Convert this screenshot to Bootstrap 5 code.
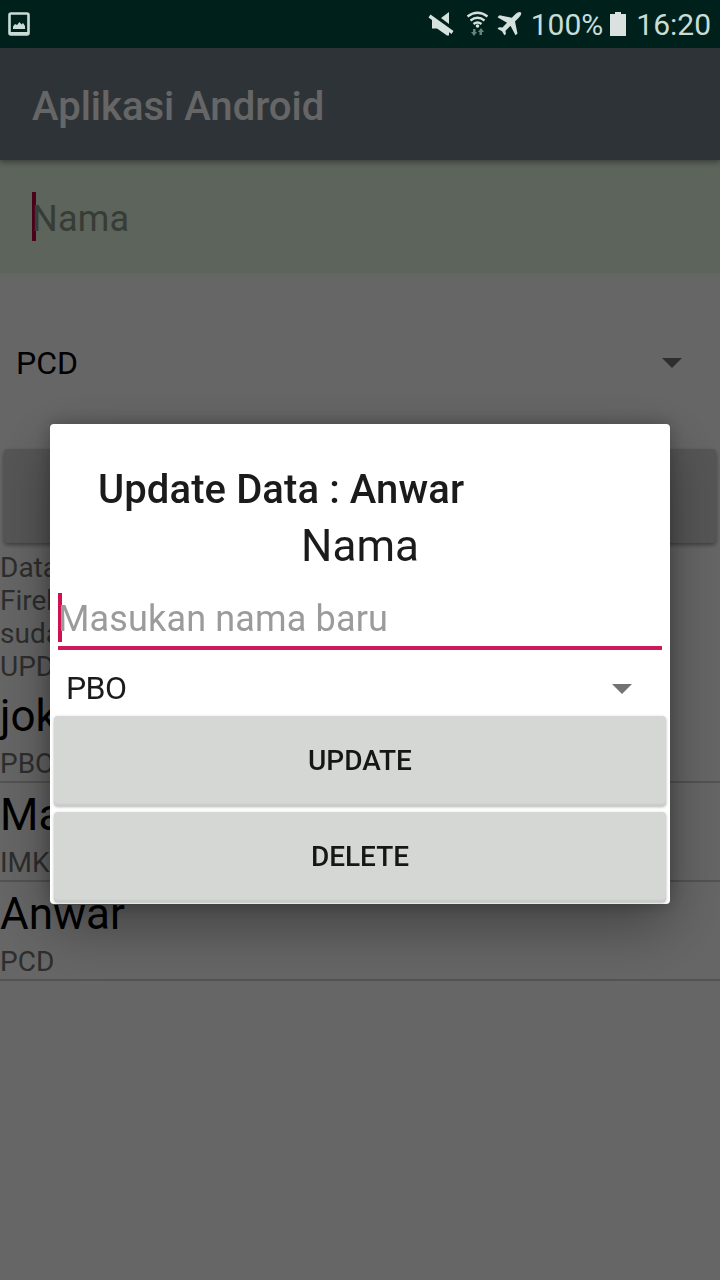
<!DOCTYPE html>
<html lang="id">
<head>
<meta charset="utf-8">
<meta name="viewport" content="width=device-width, initial-scale=1">
<title>Aplikasi Android</title>
<link href="https://cdn.jsdelivr.net/npm/bootstrap@5.3.0/dist/css/bootstrap.min.css" rel="stylesheet">
<style>
  body { font-family: Roboto, sans-serif; line-height: 1.172; color: #000; background: #fff; height: 1280px; overflow: hidden; }
  .status-bar { height: 48px; background: #00211b; color: #c9dcd6; font-size: 30px; position: relative; z-index: 1060; }
  .status-text { padding-top: 2px; }
  .app-bar { height: 112px; background: #707f8a; color: #fff; font-size: 40px; font-weight: 500; padding: 7px 32px 0; box-shadow: 0 2px 6px rgba(0,0,0,.4); position: relative; }
  .name-field { height: 113px; background: #e7f9e4; padding: 6px 32px 0; font-size: 36px; letter-spacing: .2px; color: #8b9689; }
  .caret-line { width: 4px; height: 49px; background: #d01050; flex: none; margin-right: -4px; }
  .caret-main { background: #b8063d; margin-top: -6px; }
  .spinner-main { height: 180px; font-size: 32px; padding: 0 38px 0 16px; }
  .spinner-main span:first-child { padding-top: 2px; }
  .arrow-down { width: 20px; height: 10px; background: #737373; clip-path: polygon(0 0, 100% 0, 50% 100%); }
  .main-btn { height: 94px; margin: -4px 4px 0; background: #d6d7d6; border-radius: 4px; box-shadow: 0 2px 4px rgba(0,0,0,.4); }
  .note { margin-top: 8px; font-size: 28px; line-height: 33px; color: #737373; }
  .entry { height: 99px; border-bottom: 2px solid #cfcfcf; padding-top: 6px; }
  .entries { padding-top: 1px; }
  .entry-name { font-size: 44px; line-height: 52px; }
  .entry-sub { font-size: 28px; line-height: 33px; margin-top: 5px; color: #737373; }
  .scrim { background: rgba(0,0,0,.6); padding-top: 424px; }
  .dialog-box { width: 620px; height: 480px; border: 0; border-radius: 4px; background: #fff; color: #1b1b1b; box-shadow: 0 22px 60px rgba(0,0,0,.36), 0 0 18px rgba(0,0,0,.26); overflow: hidden; }
  .dialog-box > * { flex-shrink: 0; }
  .dialog-heading { font-size: 40px; font-weight: 500; line-height: 47px; letter-spacing: .1px; padding: 42px 48px 0; }
  .dialog-label { font-size: 44px; line-height: 52px; margin-top: 7px; }
  .dialog-input { height: 57px; margin: 21px 8px 0; border-bottom: 4px solid #cc1a5a; font-size: 36px; letter-spacing: .15px; color: #9b9b9b; }
  .dialog-input .caret-line { align-self: flex-start; }
  .dialog-select { height: 66px; padding: 12px 38px 0 16px; font-size: 32px; letter-spacing: -.6px; }
  .flat-btn { height: 90px; margin: 0 4px 6px; padding: 0; background: #d5d7d5; border-radius: 4px; border: 0; font-size: 28px; font-weight: 500; color: #161616; box-shadow: 0 1px 3px rgba(0,0,0,.3), inset 0 -3px 2px -1px rgba(0,0,0,.06); }
</style>
</head>
<body>
<div class="status-bar d-flex align-items-center">
  <svg class="ms-2" width="22" height="24" viewBox="0 0 22 24"><rect x="1.5" y="1.5" width="19" height="21" rx="1.5" fill="none" stroke="#c9dcd6" stroke-width="2.6"/><path d="M1 20h20v3H1zM5 17v-2.500l2-2.500 2 1 2.500-3 2 2.500 1.500-1.500 2 3v3z" fill="#c9dcd6"/></svg>
  <svg class="ms-auto" width="96" height="48" viewBox="428 0 96 48" fill="#d5e1dc">
    <path d="M432 19v9.500h5l10 7h2v-5zM441 18l8-6v12z"/>
    <path d="M429.500 16l23 16.500" stroke="#d5e1dc" stroke-width="3.400"/>
    <g fill="none" stroke="#d5e1dc" stroke-width="2.300"><path d="M467.500 16.500Q477.500 9 487.500 16.500M470.500 20.500Q477.500 15 484.500 20.500M473.500 24Q477.500 21 481.500 24"/></g>
    <circle cx="477.500" cy="26" r="1.800"/>
    <path d="M473 29h2.500v3h1.500l-3 4-3-4h2zM481 28l3 4h-2v3h-2.500v-3h-1.500z" fill="#66847c"/>
    <path d="M521 12.500q1 2-2 5l-4 4 2.500 12-2 1.800-5-9.500-5 5 .4 3.200-1.500 1.300-2.400-4-4.500-2.500 1.500-1.500 3.500.3 4.500-4.800-9.500-5.500 2-2 12.300 2.500 4-4q3.200-3 5.200-1.300z"/>
  </svg>
  <span class="status-text" style="margin-left:7px">100%</span>
  <svg width="16" height="24" viewBox="0 0 16 24" style="margin-left:7px"><path d="M0 2h5V0h6v2h5v22H0z" fill="#d9e2de"/></svg>
  <span class="status-text" style="margin:0 9px 0 10px">16:20</span>
</div>
<header class="app-bar d-flex align-items-center">Aplikasi Android</header>
<main>
  <div class="name-field d-flex align-items-center"><span class="caret-line caret-main"></span><span>Nama</span></div>
  <div class="spinner-main d-flex align-items-center justify-content-between"><span>PCD</span><span class="arrow-down"></span></div>
  <div class="main-btn"></div>
  <div class="note">Data<br>Fireb<br>suda<br>UPD</div>
  <div class="entries">
    <div class="entry"><div class="entry-name">jok</div><div class="entry-sub">PBO</div></div>
    <div class="entry"><div class="entry-name">Ma</div><div class="entry-sub">IMK</div></div>
    <div class="entry"><div class="entry-name">Anwar</div><div class="entry-sub">PCD</div></div>
  </div>
</main>
<div class="modal d-block scrim overflow-hidden">
  <div class="modal-content dialog-box mx-auto">
    <div class="dialog-heading">Update Data : Anwar</div>
    <div class="dialog-label text-center">Nama</div>
    <div class="dialog-input d-flex align-items-center"><span class="caret-line"></span><span>Masukan nama baru</span></div>
    <div class="dialog-select d-flex align-items-center justify-content-between"><span>PBO</span><span class="arrow-down"></span></div>
    <button class="flat-btn" type="button">UPDATE</button>
    <button class="flat-btn" type="button">DELETE</button>
  </div>
</div>
<script src="https://cdn.jsdelivr.net/npm/bootstrap@5.3.0/dist/js/bootstrap.bundle.min.js"></script>
</body>
</html>
